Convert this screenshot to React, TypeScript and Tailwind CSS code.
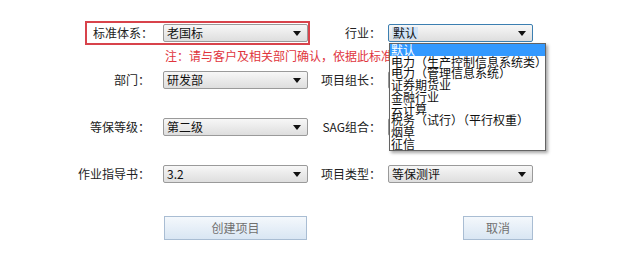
import React from 'react';

const font = { fontFamily: '"Noto Sans CJK SC", "Liberation Sans", sans-serif' };

const industries = [
  '默认',
  '电力（生产控制信息系统类）',
  '电力（管理信息系统）',
  '证券期货业',
  '金融行业',
  '云计算',
  '税务（试行）（平行权重）',
  '烟草',
  '征信',
];

const Arrow = () => (
  <svg width="8" height="5" viewBox="0 0 8 5" className="shrink-0">
    <path d="M0 0 H8 L4 5 Z" fill="#111" />
  </svg>
);

const Select: React.FC<{ value: string; focused?: boolean; className?: string }> = ({ value, focused, className }) => (
  <div
    className={`h-[18px] flex items-center justify-between pl-[3px] pr-[6px] rounded-[2px] border text-[12px] leading-none text-[#111] bg-gradient-to-b from-[#f7f7f7] to-[#dedede] ${
      focused ? 'border-[#3c7fb1]' : 'border-[#9a9a9a]'
    } ${className ?? 'w-[145px]'}`}
  >
    <span className={focused ? 'bg-[#cfe3f7] px-[1px]' : ''}>{value}</span>
    <Arrow />
  </div>
);

const Label: React.FC<{ text: string; width: string }> = ({ text, width }) => (
  <div className={`${width} text-right text-[12px] text-[#222] shrink-0`}>{text}</div>
);

export default function App() {
  return (
    <div className="w-[630px] h-[259px] bg-white overflow-hidden pt-[21px]" style={font}>
      {/* row 1 */}
      <div className="flex items-center h-[24px]">
        <div className="ml-[85px] w-[225px] h-[24px] border-2 border-[#d8434b] flex items-center">
          <div className="w-[76px] pl-[6px] text-[12px] text-[#222]">标准体系：</div>
          <Select value="老国标" />
        </div>
        <Label text="行业：" width="w-[71px]" />
        <div className="relative ml-[7px] z-10">
          <Select value="默认" focused />
          <div className="absolute left-[1px] top-[19px] w-[157px] bg-white border border-[#646464] shadow-[2px_2px_3px_rgba(0,0,0,0.35)] text-[12px] leading-[11.7px] text-[#111] pb-[1px]">
            {industries.map((it, i) => (
              <div
                key={it}
                className={`whitespace-nowrap pl-[1px] ${i === 0 ? 'bg-[#3399ff] text-white' : ''}`}
              >
                {it}
              </div>
            ))}
          </div>
        </div>
      </div>

      {/* note */}
      <div className="mt-[4px] pl-[165px] h-[14px] text-[12px] leading-[14px] text-[#e0353d] whitespace-nowrap">
        注：请与客户及相关部门确认，依据此标准(
      </div>

      {/* row 2 */}
      <div className="flex items-center h-[18px] mt-[8px]">
        <Label text="部门：" width="w-[150px]" />
        <Select value="研发部" className="w-[145px] ml-[13px]" />
        <Label text="项目组长：" width="w-[73px]" />
        <Select value="" className="w-[145px] ml-[7px]" />
      </div>

      {/* row 3 */}
      <div className="flex items-center h-[18px] mt-[29px]">
        <Label text="等保等级：" width="w-[150px]" />
        <Select value="第二级" className="w-[145px] ml-[13px]" />
        <Label text="SAG组合：" width="w-[73px]" />
        <Select value="" className="w-[145px] ml-[7px]" />
      </div>

      {/* row 4 */}
      <div className="flex items-center h-[18px] mt-[29px]">
        <Label text="作业指导书：" width="w-[150px]" />
        <Select value="3.2" className="w-[145px] ml-[13px]" />
        <Label text="项目类型：" width="w-[73px]" />
        <Select value="等保测评" className="w-[145px] ml-[7px]" />
      </div>

      {/* buttons */}
      <div className="flex items-center h-[24px] mt-[33px]">
        <button className="ml-[164px] w-[143px] h-[24px] border border-[#a9bdd3] bg-gradient-to-b from-[#f4f8fc] to-[#d9e6f3] text-[12px] text-[#707070]">
          创建项目
        </button>
        <button className="ml-[156px] w-[70px] h-[24px] border border-[#a9bdd3] bg-gradient-to-b from-[#f4f8fc] to-[#d9e6f3] text-[12px] text-[#707070]">
          取消
        </button>
      </div>
    </div>
  );
}
